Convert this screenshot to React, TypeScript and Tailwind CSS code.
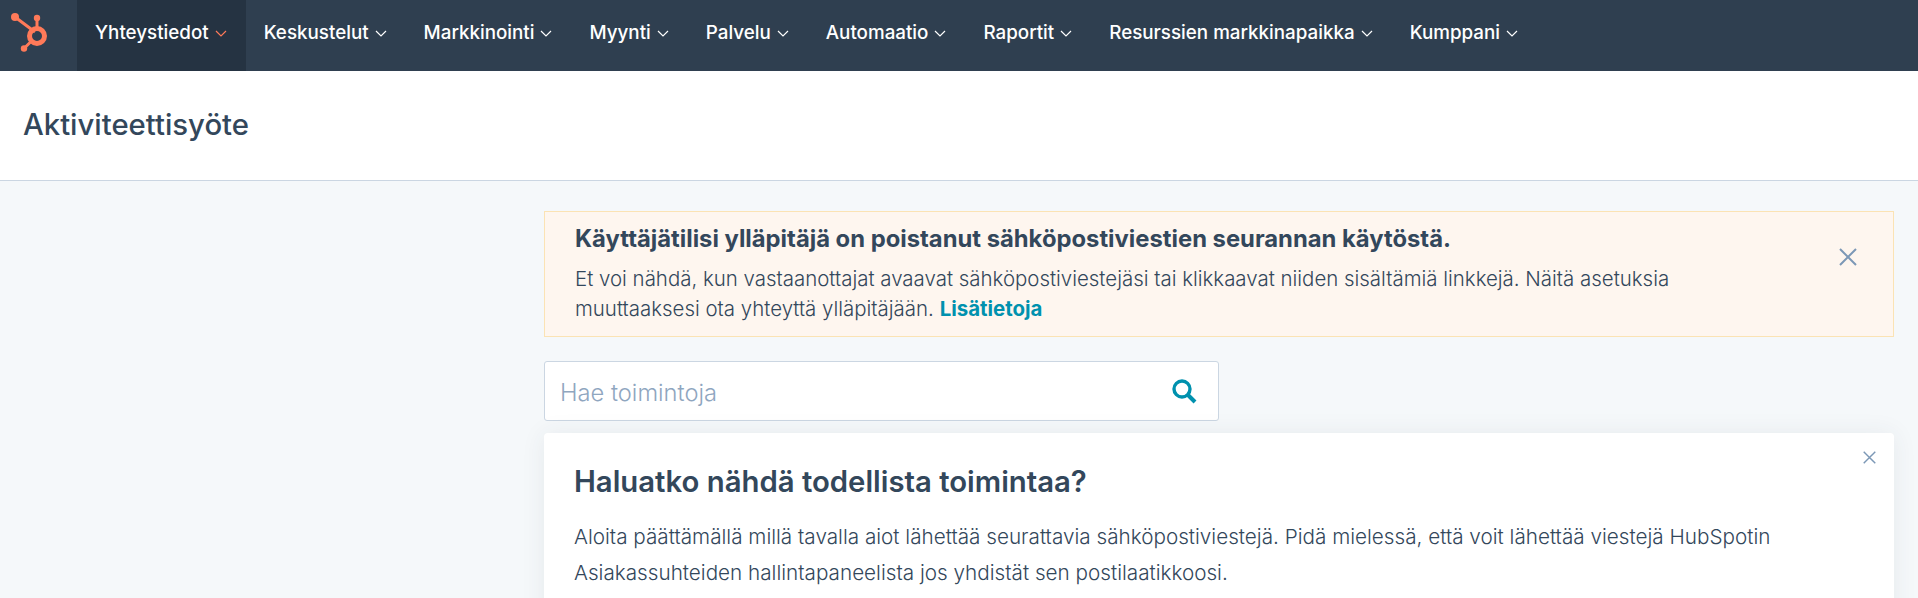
const navItems = ["Yhteystiedot", "Keskustelut", "Markkinointi", "Myynti", "Palvelu", "Automaatio", "Raportit", "Resurssien markkinapaikka", "Kumppani"];

const Chevron = ({ active }: { active: boolean }) => (
    <svg width="12" height="7" viewBox="0 0 12 7" fill="none" className={active ? "text-[#ff7a59]" : "text-white"}>
        <path d="M1 1l5 5 5-5" stroke="currentColor" strokeWidth="1.2" />
    </svg>
);

const Logo = () => (
    <svg width="38" height="40" viewBox="0 0 38 40" fill="none">
        <path d="M4 5l20 15M26 6v12M13 36.5l9-9" stroke="#ff7a59" strokeWidth="3" />
        <circle cx="4" cy="5" r="4" fill="#ff7a59" />
        <circle cx="26" cy="6" r="3.2" fill="#ff7a59" />
        <circle cx="13" cy="36.5" r="3.2" fill="#ff7a59" />
        <circle cx="26" cy="24" r="7.5" stroke="#ff7a59" strokeWidth="5" />
    </svg>
);

const CloseIcon = ({ size }: { size: number }) => (
    <svg width={size} height={size} viewBox="0 0 18 18" fill="none">
        <path d="M1 1l16 16M17 1L1 17" stroke="#7c98b6" strokeWidth="2" />
    </svg>
);

const App = () => {
    return (
        <div className="h-[598px] overflow-hidden bg-[#f5f8fa] font-['Inter',sans-serif] text-[#33475b]">
            <nav className="flex h-[71px] bg-[#2f3f50] text-white">
                <div className="flex w-[77px] items-center pb-[8px] pl-[11px]">
                    <Logo />
                </div>
                {navItems.map((item, i) => (
                    <div key={item} className={`flex items-center gap-[6px] pr-[19px] pb-[4px] pl-[18px] text-[18.8px] font-medium ${i === 0 ? "bg-[#253342]" : ""}`}>
                        {item}
                        <Chevron active={i === 0} />
                    </div>
                ))}
            </nav>
            <header className="flex h-[110px] items-center border-b border-[#cbd6e2] bg-white pb-[2px] pl-[23px]">
                <h1 className="text-[29.3px] font-medium">Aktiviteettisyöte</h1>
            </header>
            <main className="ml-[544px] mr-[24px] pt-[30px]">
                <div className="flex h-[126px] justify-between border border-[#fbe3b4] bg-[#fef6ef] pl-[30px] pr-[36px]">
                    <div className="w-[1130px] pt-[13px]">
                        <h2 className="text-[23.8px] leading-[28px] font-bold">Käyttäjätilisi ylläpitäjä on poistanut sähköpostiviestien seurannan käytöstä.</h2>
                        <p className="mt-[11px] text-[20.45px] leading-[30px] font-light">
                            Et voi nähdä, kun vastaanottajat avaavat sähköpostiviestejäsi tai klikkaavat niiden sisältämiä linkkejä. Näitä asetuksia muuttaaksesi ota yhteyttä ylläpitäjään. <a className="font-bold text-[#0091ae]">Lisätietoja</a>
                        </p>
                    </div>
                    <div className="pt-[36px]">
                        <CloseIcon size={18} />
                    </div>
                </div>
                <div className="mt-[24px] flex h-[60px] w-[675px] items-center justify-between rounded-[3px] border border-[#cbd6e2] bg-white pl-[15px] pr-[21px]">
                    <span className="pt-[3px] text-[23.7px] font-light text-[#8fa6bf]">Hae toimintoja</span>
                    <svg width="26" height="26" viewBox="0 0 26 26" fill="none">
                        <circle cx="11" cy="11" r="8" stroke="#0091ae" strokeWidth="3.4" />
                        <path d="M17 17l7 7" stroke="#0091ae" strokeWidth="4" />
                    </svg>
                </div>
                <section className="relative mt-[12px] h-[300px] rounded-[4px] bg-white px-[30px] pt-[29px] shadow-[0_1px_24px_rgba(45,62,80,0.08)]">
                    <button className="absolute top-[18px] right-[18px]">
                        <CloseIcon size={13} />
                    </button>
                    <h2 className="text-[29.3px] leading-[40px] font-semibold">Haluatko nähdä todellista toimintaa?</h2>
                    <p className="mt-[17px] w-[1240px] text-[20.7px] leading-[36px] font-light">
                        Aloita päättämällä millä tavalla aiot lähettää seurattavia sähköpostiviestejä. Pidä mielessä, että voit lähettää viestejä HubSpotin Asiakassuhteiden hallintapaneelista jos yhdistät sen postilaatikkoosi.
                    </p>
                </section>
            </main>
        </div>
    );
};

export default App;
